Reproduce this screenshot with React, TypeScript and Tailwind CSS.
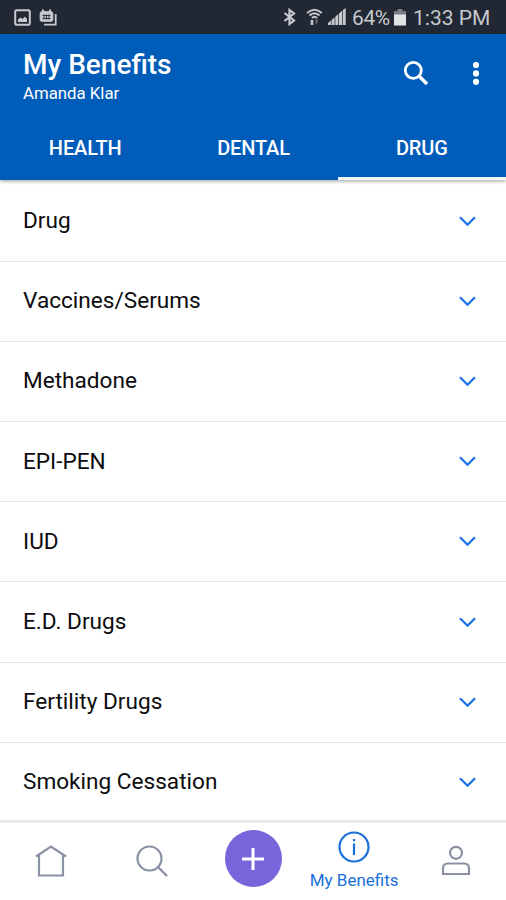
const tabs = ["HEALTH", "DENTAL", "DRUG"];

const benefits = [
  "Drug",
  "Vaccines/Serums",
  "Methadone",
  "EPI-PEN",
  "IUD",
  "E.D. Drugs",
  "Fertility Drugs",
  "Smoking Cessation",
];

function StatusBar() {
  return (
    <div className="flex h-[34px] shrink-0 items-center justify-between bg-[#222833] pr-[15px] pl-[14px] text-[#c6c9cd]">
      <div className="flex items-center gap-[8px]">
        <svg width="17" height="17" viewBox="0 0 17 17" fill="none">
          <rect x="1.2" y="1.2" width="14.6" height="14.6" rx="1.5" stroke="currentColor" strokeWidth="2" />
          <path d="M4 13V10.5L6.5 8.5L8.5 10L11 7.5L13 10V13Z" fill="currentColor" />
        </svg>
        <svg width="18" height="17" viewBox="0 0 18 17" fill="none">
          <path d="M4 0.5V3M11 0.5V3" stroke="currentColor" strokeWidth="2" />
          <rect x="1.2" y="2.7" width="12.6" height="9.6" rx="1.5" fill="currentColor" stroke="currentColor" />
          <path d="M3.5 6.5H11.5M3.5 9.5H11.5M5 5.5V10.5M7.5 5.5V10.5M10 5.5V10.5" stroke="#222833" strokeWidth="0.9" />
          <path d="M16.7 5V15.7H5" stroke="currentColor" strokeWidth="1.8" />
        </svg>
      </div>
      <div className="flex items-center">
        <svg width="13" height="18" viewBox="0 0 13 18" fill="none" className="mr-[10px]">
          <path d="M1.5 5L11 12.5L6.5 16V2L11 5.5L1.5 13" stroke="currentColor" strokeWidth="2.2" />
        </svg>
        <svg width="17" height="18" viewBox="0 0 17 18" fill="none" className="mr-[5px]">
          <path d="M1.2 5Q8.5 -1.5 15.8 5M3.5 7.5Q8.5 3 13.5 7.5M6 10Q8.5 7.5 11 10" stroke="currentColor" strokeWidth="2.1" />
          <path d="M6 12V17" stroke="currentColor" strokeWidth="2.6" />
          <path d="M10.5 11.5V15.5" stroke="currentColor" strokeWidth="1.8" opacity="0.5" />
        </svg>
        <svg width="18" height="18" viewBox="0 0 18 18" fill="currentColor" className="mr-[6px]">
          <path d="M0 17V15L3 12.6V17ZM3.6 17V12L6.6 9.4V17ZM7.3 17V8.8L10.3 6.1V17ZM11 17V5.5L14 2.8V17ZM14.7 17V2.2L17.7 0V17Z" />
        </svg>
        <span className="w-[40px] pt-[1px] text-[21px] leading-[34px] tracking-[-0.4px] whitespace-nowrap">64%</span>
        <svg width="12" height="18" viewBox="0 0 12 18" className="mr-[7px] ml-[2px]">
          <path d="M3.5 1H8.5V3H12V7H0V3H3.5Z" fill="#777b82" />
          <path d="M0 6.5H12V17.5H0Z" fill="#e3e4e6" />
        </svg>
        <span className="w-[78px] pt-[1px] text-[21px] leading-[34px] whitespace-nowrap">1:33 PM</span>
      </div>
    </div>
  );
}

function Header() {
  return (
    <header className="relative z-10 flex h-[146px] shrink-0 flex-col bg-[#005cb9] text-white shadow-[0_1px_4px_rgba(0,0,0,0.4)]">
      <div className="flex h-[80px] justify-between pl-[23px]">
        <div className="pt-[13px]">
          <h1 className="text-[28px] leading-[35px] font-medium">My Benefits</h1>
          <p className="text-[16.8px] leading-[22px]">Amanda Klar</p>
        </div>
        <div className="flex pt-[25px]">
          <svg width="28" height="28" viewBox="0 0 28 28" fill="none" stroke="currentColor" className="mr-[42px]">
            <circle cx="11.3" cy="11.3" r="8" strokeWidth="2.8" />
            <path d="M17 17L25 25" strokeWidth="3.4" />
          </svg>
          <svg width="8" height="28" viewBox="0 0 8 28" fill="currentColor" className="mr-[26px]">
            <circle cx="4" cy="6" r="3.1" />
            <circle cx="4" cy="14.4" r="3.1" />
            <circle cx="4" cy="22.8" r="3.1" />
          </svg>
        </div>
      </div>
      <div className="grid flex-1 grid-cols-3 pl-[1px]">
        {tabs.map((tab) => (
          <div
            key={tab}
            className={
              tab === "DRUG"
                ? "border-b-[3px] border-[#f4f6fa] pt-[19px] text-center"
                : "pt-[19px] text-center"
            }
          >
            <span className="text-[20px] leading-[30px] font-medium tracking-[-0.15px]">{tab}</span>
          </div>
        ))}
      </div>
    </header>
  );
}

function BottomNav() {
  return (
    <nav className="grid h-[80px] shrink-0 grid-cols-5 border-t-[3px] border-[#ebebeb] bg-white text-[#8a91a5]">
      <div className="flex justify-center pt-[21px]">
        <svg width="32" height="34" viewBox="0 0 32 34" fill="none" stroke="currentColor" strokeWidth="2.2">
          <path d="M1 12.5L16 2.5L31 12.5M4 10.5V31.5H28V10.5" />
        </svg>
      </div>
      <div className="flex justify-center pt-[22px]">
        <svg width="32" height="34" viewBox="0 0 32 34" fill="none" stroke="currentColor" strokeWidth="2.2">
          <circle cx="13.5" cy="13.5" r="12" />
          <path d="M22 22L31 31" strokeWidth="2.4" />
        </svg>
      </div>
      <div className="flex justify-center pt-[7px] pl-[1px]">
        <div className="flex h-[57px] w-[57px] items-center justify-center rounded-full bg-[#7865dc]">
          <svg width="24" height="24" viewBox="0 0 24 24" stroke="#fff" strokeWidth="3">
            <path d="M12 1V23M1 12H23" />
          </svg>
        </div>
      </div>
      <div className="flex flex-col items-center pt-[8px] text-[#1a6fdb]">
        <svg width="32" height="32" viewBox="0 0 32 32" fill="none" stroke="currentColor" strokeWidth="2.2">
          <circle cx="16" cy="16" r="14.5" />
          <path d="M16 12.5V24M16 8V10.2" />
        </svg>
        <span className="mt-[6px] text-[17px] leading-[22px] whitespace-nowrap">My Benefits</span>
      </div>
      <div className="flex justify-center pt-[22px] pl-[1px]">
        <svg width="30" height="34" viewBox="0 0 30 34" fill="none" stroke="currentColor" strokeWidth="2.2">
          <circle cx="15" cy="7.8" r="6" />
          <path d="M2 29V23.5Q2 18.5 7 18.5H23Q28 18.5 28 23.5V29Z" />
        </svg>
      </div>
    </nav>
  );
}

export default function App() {
  return (
    <div className="flex h-[900px] w-[506px] flex-col overflow-hidden bg-white font-['Roboto',sans-serif]">
      <StatusBar />
      <Header />
      <main className="flex-1 overflow-hidden pt-[1.5px]">
        {benefits.map((item) => (
          <div
            key={item}
            className="flex h-[80.2px] items-center justify-between border-b border-[#e8e8eb] pr-[30px] pl-[23px]"
          >
            <span className="text-[22.6px] leading-[30px] text-[#0c0c0e]">{item}</span>
            <svg width="17" height="11" viewBox="0 0 17 11" fill="none" stroke="#1a73e8" strokeWidth="2.3">
              <path d="M1 1.3L8.5 8.7L16 1.3" />
            </svg>
          </div>
        ))}
      </main>
      <BottomNav />
    </div>
  );
}
